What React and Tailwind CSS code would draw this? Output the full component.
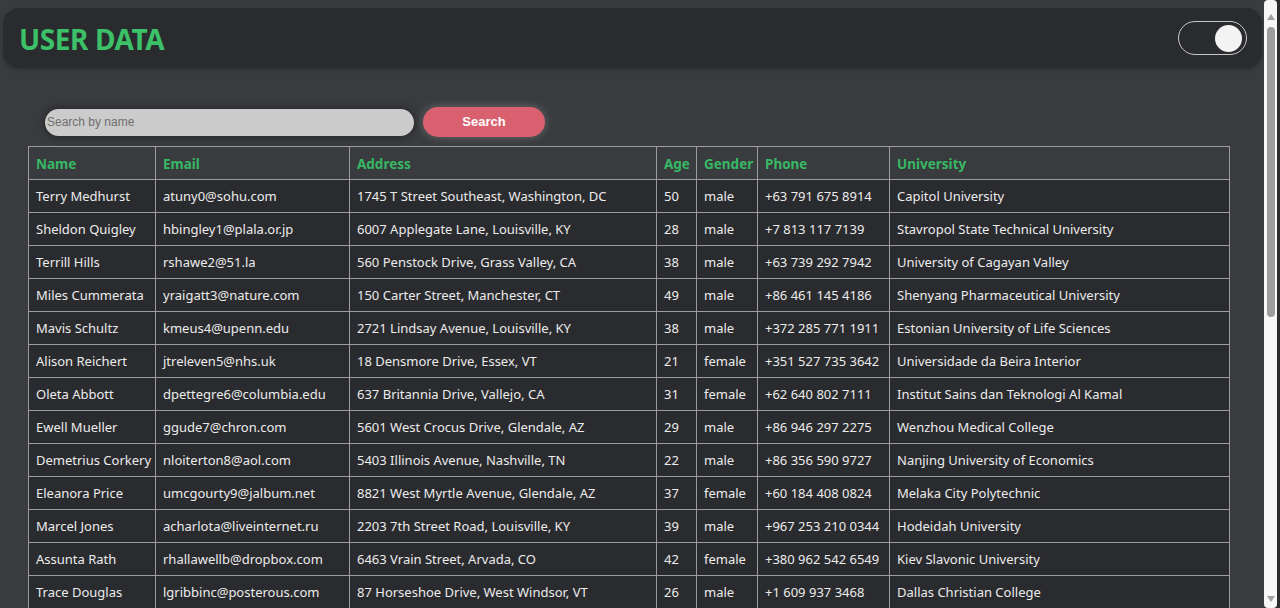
import React, { useState } from 'react';

const users = [
    ["Terry Medhurst", "atuny0@sohu.com", "1745 T Street Southeast, Washington, DC", 50, "male", "+63 791 675 8914", "Capitol University"],
    ["Sheldon Quigley", "hbingley1@plala.or.jp", "6007 Applegate Lane, Louisville, KY", 28, "male", "+7 813 117 7139", "Stavropol State Technical University"],
    ["Terrill Hills", "rshawe2@51.la", "560 Penstock Drive, Grass Valley, CA", 38, "male", "+63 739 292 7942", "University of Cagayan Valley"],
    ["Miles Cummerata", "yraigatt3@nature.com", "150 Carter Street, Manchester, CT", 49, "male", "+86 461 145 4186", "Shenyang Pharmaceutical University"],
    ["Mavis Schultz", "kmeus4@upenn.edu", "2721 Lindsay Avenue, Louisville, KY", 38, "male", "+372 285 771 1911", "Estonian University of Life Sciences"],
    ["Alison Reichert", "jtreleven5@nhs.uk", "18 Densmore Drive, Essex, VT", 21, "female", "+351 527 735 3642", "Universidade da Beira Interior"],
    ["Oleta Abbott", "dpettegre6@columbia.edu", "637 Britannia Drive, Vallejo, CA", 31, "female", "+62 640 802 7111", "Institut Sains dan Teknologi Al Kamal"],
    ["Ewell Mueller", "ggude7@chron.com", "5601 West Crocus Drive, Glendale, AZ", 29, "male", "+86 946 297 2275", "Wenzhou Medical College"],
    ["Demetrius Corkery", "nloiterton8@aol.com", "5403 Illinois Avenue, Nashville, TN", 22, "male", "+86 356 590 9727", "Nanjing University of Economics"],
    ["Eleanora Price", "umcgourty9@jalbum.net", "8821 West Myrtle Avenue, Glendale, AZ", 37, "female", "+60 184 408 0824", "Melaka City Polytechnic"],
    ["Marcel Jones", "acharlota@liveinternet.ru", "2203 7th Street Road, Louisville, KY", 39, "male", "+967 253 210 0344", "Hodeidah University"],
    ["Assunta Rath", "rhallawellb@dropbox.com", "6463 Vrain Street, Arvada, CO", 42, "female", "+380 962 542 6549", "Kiev Slavonic University"],
    ["Trace Douglas", "lgribbinc@posterous.com", "87 Horseshoe Drive, West Windsor, VT", 26, "male", "+1 609 937 3468", "Dallas Christian College"],
];

const columns = ["Name", "Email", "Address", "Age", "Gender", "Phone", "University"];
const colWidths = ["w-[127px]", "w-[194px]", "w-[307px]", "w-[40px]", "w-[61px]", "w-[132px]", "w-[340px]"];

// fake window scrollbar, as in the screenshot
const Scrollbar = () => (
    <div className="w-[16px] h-full bg-[#2b2c2f] flex shrink-0">
        <div className="w-[13px] h-full bg-[#f7f7f7] rounded-t-[4px] rounded-b-[4px] flex flex-col items-center pt-[14px] pb-[6px]">
            <svg width="8" height="6" viewBox="0 0 8 6"><path d="M4 0L8 6H0z" fill="#a3a3a3" /></svg>
            <div className="w-[8px] h-[290px] mt-[7px] rounded-full bg-[#9d9d9d]"></div>
            <div className="flex-1"></div>
            <svg width="8" height="6" viewBox="0 0 8 6"><path d="M0 0H8L4 6z" fill="#a3a3a3" /></svg>
        </div>
    </div>
);

const App = () => {
    const [dark, setDark] = useState(true);
    const [query, setQuery] = useState('');

    const shown = users.filter((u) => u[0].toLowerCase().includes(query.toLowerCase()));

    return (
        <div className="h-screen flex overflow-hidden bg-[#3a3b3f] font-['Noto_Sans',sans-serif]">
            <div className="flex-1 overflow-hidden pt-2">
                {/* header */}
                <div className="ml-[3px] mr-[2px] h-[60px] rounded-[16px] bg-[#2a2b2e] shadow-[0_2px_4px_rgba(0,0,0,0.2)] flex items-center justify-between pl-[16px] pr-[15px]">
                    <h1 className="text-[28px] font-bold text-[#3cc068] tracking-[-0.4px] leading-none pt-[1px]">USER DATA</h1>
                    <button
                        onClick={() => setDark(!dark)}
                        className="w-[69px] h-[34px] rounded-full border border-[#c8c8c8] flex items-center justify-end px-[4px]"
                    >
                        <span className="block w-[27px] h-[27px] rounded-full bg-[#f3f3f3]"></span>
                    </button>
                </div>

                {/* search */}
                <div className="flex items-center gap-[9px] mt-[39px] ml-[45px]">
                    <input
                        value={query}
                        onChange={(e) => setQuery(e.target.value)}
                        placeholder="Search by name"
                        className="w-[369px] h-[27px] rounded-full bg-[#cbcbcb] px-[2px] text-[12px] text-[#333] placeholder:text-[#6f6f6f] font-['Liberation_Sans',Arial,sans-serif] shadow-[0_0_8px_rgba(0,0,0,0.45)] outline-none"
                    />
                    <button className="w-[122px] h-[30px] rounded-full bg-[#d9606e] text-white text-[13px] font-bold font-['Liberation_Sans',Arial,sans-serif] shadow-[0_0_10px_rgba(200,200,200,0.35)]">
                        Search
                    </button>
                </div>

                {/* table */}
                <table className="table-fixed border-collapse ml-[28px] mt-[9px] w-[1201px] text-[13px]">
                    <thead>
                        <tr className="h-[33px]">
                            {columns.map((c, i) => (
                                <th key={c} className={`${colWidths[i]} border border-[#9c9c9c] text-left font-bold text-[13.5px] text-[#36b864] pl-[7px] pt-[2px]`}>
                                    {c}
                                </th>
                            ))}
                        </tr>
                    </thead>
                    <tbody>
                        {shown.map((u) => (
                            <tr key={u[1]} className="h-[33px] bg-[#2a2b2e]">
                                {u.map((v, i) => (
                                    <td key={i} className="border border-[#9c9c9c] text-[#ececec] pl-[7px] pt-[2px] whitespace-nowrap overflow-hidden">
                                        {v}
                                    </td>
                                ))}
                            </tr>
                        ))}
                        <tr className="h-[33px] bg-[#2a2b2e]">
                            {columns.map((c) => (
                                <td key={c} className="border border-[#9c9c9c]"></td>
                            ))}
                        </tr>
                    </tbody>
                </table>
            </div>
            <Scrollbar />
        </div>
    );
};

export default App;
